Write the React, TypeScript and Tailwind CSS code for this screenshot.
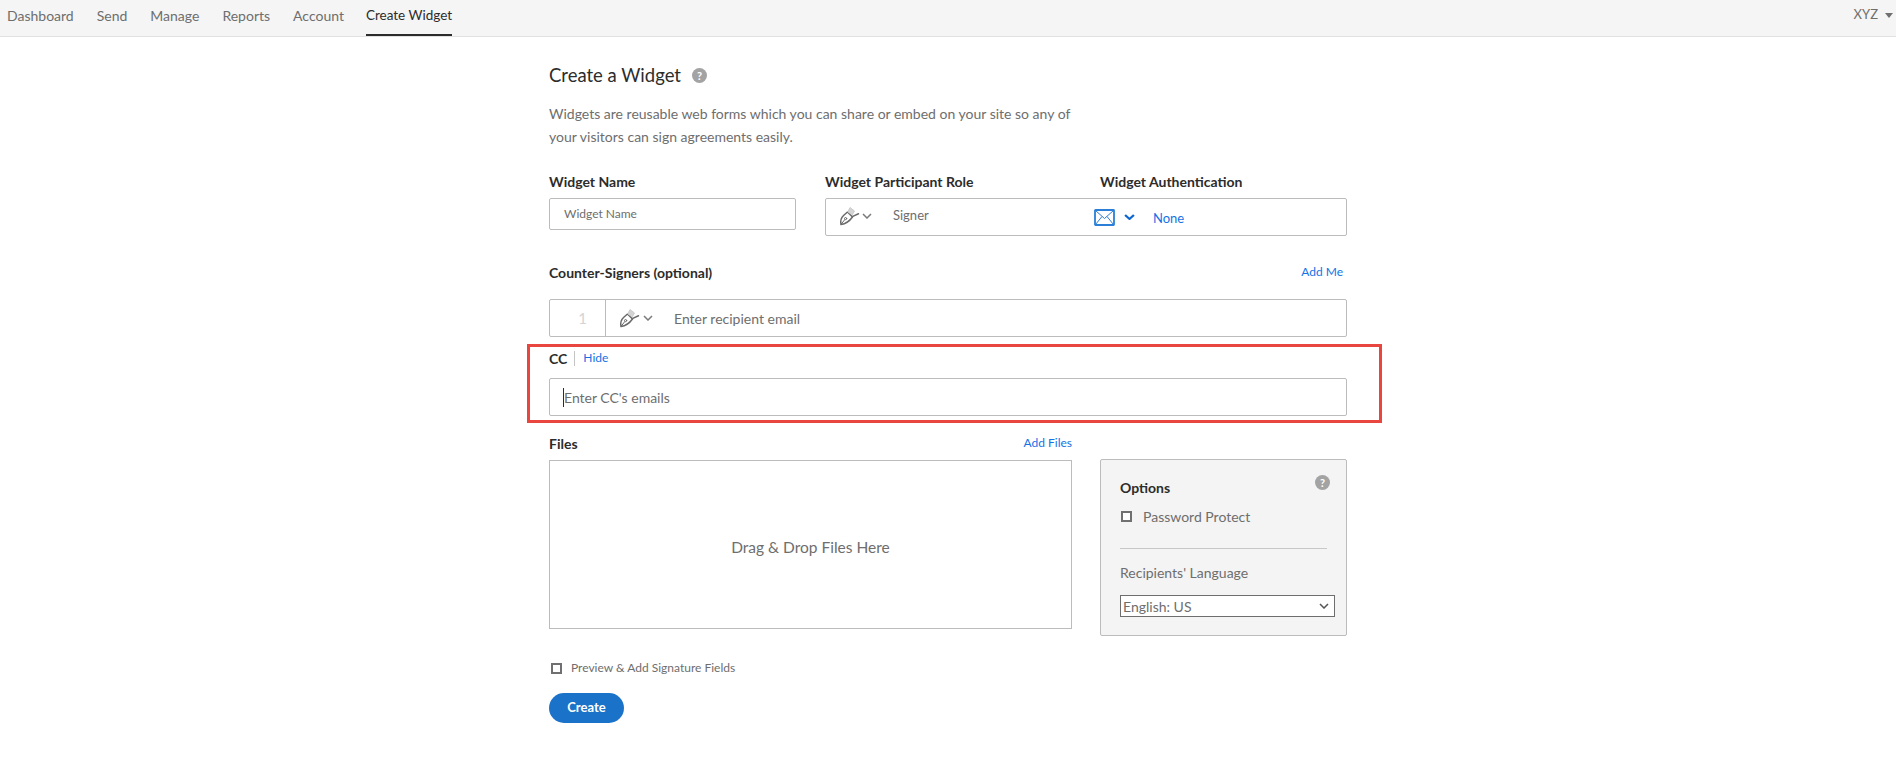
function HelpIcon() {
  return (
    <span className="flex h-[15px] w-[15px] items-center justify-center rounded-full bg-[#a3a3a3] text-[11px] leading-none font-bold text-white">
      ?
    </span>
  );
}

function PenIcon() {
  return (
    <svg width="21" height="20" viewBox="0 0 21 20" fill="none" stroke="#6a6a6a" strokeWidth="1.5" strokeLinejoin="round" strokeLinecap="round">
      <path d="M2 18.5 C1.2 14.5 2.2 11.5 4.8 9.2 L8.5 6 L13.5 11 C11 14.5 7 17.8 2 18.5 Z" />
      <path d="M9 5.5 L11 1.5 L15.5 5 L13.5 8.5 Z" fill="#d4d4d4" stroke="#cccccc" strokeWidth="1" />
      <path d="M13.2 10.6 L19.5 7.8" />
      <path d="M2.4 18 L5.6 13.8" strokeWidth="1" />
      <circle cx="6.6" cy="12.6" r="1.1" strokeWidth="1" />
    </svg>
  );
}

function Chevron({ color = '#7a7a7a', w = 1.5, size = 10 }: { color?: string; w?: number; size?: number }) {
  return (
    <svg width={size} height="6" viewBox="0 0 10 6" preserveAspectRatio="none" fill="none" stroke={color} strokeWidth={w}>
      <path d="M1 1 L5 5 L9 1" />
    </svg>
  );
}

function Envelope() {
  return (
    <svg width="21" height="17" viewBox="0 0 21 17" fill="none" stroke="#2b7fd6" strokeWidth="1">
      <rect x="1" y="1" width="19" height="15" rx="0.5" strokeWidth="1.8" />
      <path d="M1.5 1.5 L10.5 9.5 L19.5 1.5 M1.5 15.5 L8 7.5 M19.5 15.5 L13 7.5" />
    </svg>
  );
}

function Checkbox() {
  return <span className="block h-[11px] w-[11px] border-2 border-[#707070] bg-white" />;
}

const tabs = ['Dashboard', 'Send', 'Manage', 'Reports', 'Account'];

export default function App() {
  return (
    <div className="min-h-[758px] bg-white font-['Lato',sans-serif] text-[14px] text-[#6e6e6e]">
      {/* top nav */}
      <div className="flex h-[37px] items-stretch border-b border-[#e1e1e1] bg-[#f5f5f5] pl-[7px] pr-[3px]">
        <div className="flex gap-[23px]">
          {tabs.map(t => (
            <div key={t} className="flex items-center pb-[5px] text-[14px]">{t}</div>
          ))}
          <div className="-ml-[1px] flex items-center border-b-2 border-[#2c2c2c] pb-[3px] text-[13.5px] text-[#2c2c2c]">Create Widget</div>
        </div>
        <div className="ml-auto flex items-center gap-[7px] pb-[6px] text-[13px]">
          XYZ
          <span className="h-0 w-0 border-x-[4.5px] border-t-[5px] border-x-transparent border-t-[#707070]" />
        </div>
      </div>

      {/* form */}
      <div className="ml-[549px] w-[798px]">
        <div className="mt-[26px] flex h-[24px] items-center gap-[11px]">
          <h1 className="text-[18.5px] leading-none font-normal text-[#2c2c2c]">Create a Widget</h1>
          <HelpIcon />
        </div>
        <p className="mt-[15px] w-[530px] text-[14px] leading-[23px]">
          Widgets are reusable web forms which you can share or embed on your site so any of your visitors can sign agreements easily.
        </p>

        <div className="mt-[25px] flex">
          <div className="w-[247px]">
            <div className="h-[18px] text-[14px] leading-[18px] font-bold text-[#2c2c2c]">Widget Name</div>
            <div className="mt-[7px] flex h-[32px] items-center rounded-[2px] border border-[#bcbcbc] pl-[14px] text-[12px]">Widget Name</div>
          </div>
          <div className="ml-[29px] w-[522px]">
            <div className="flex h-[18px] text-[14px] leading-[18px] font-bold text-[#2c2c2c]">
              <span className="w-[275px]">Widget Participant Role</span>
              <span>Widget Authentication</span>
            </div>
            <div className="mt-[7px] flex h-[38px] items-center rounded-[2px] border border-[#bcbcbc] pb-[3px] pl-[13px]">
              <PenIcon />
              <span className="ml-[2px]"><Chevron /></span>
              <span className="ml-[21px] w-[201px] text-[13px]">Signer</span>
              <span className="mt-[3px] flex items-center">
                <Envelope />
                <span className="ml-[9px]"><Chevron color="#0d66d0" w={2} size={11} /></span>
                <span className="ml-[18px] mt-[3px] text-[13px] text-[#1473e6]">None</span>
              </span>
            </div>
          </div>
        </div>

        <div className="mt-[27px] flex h-[18px] items-center justify-between pr-[4px] text-[14px]">
          <span className="font-bold text-[#2c2c2c]">Counter-Signers (optional)</span>
          <span className="text-[12px] text-[#1473e6]">Add Me</span>
        </div>
        <div className="mt-[18px] flex h-[38px] items-stretch rounded-[2px] border border-[#bcbcbc]">
          <div className="flex w-[56px] items-center justify-center border-r border-[#bcbcbc] pl-[10px] text-[15px] text-[#d4d4d4]">1</div>
          <div className="ml-[13px] flex items-center"><PenIcon /></div>
          <div className="ml-[3px] flex items-center"><Chevron /></div>
          <div className="ml-[21px] flex items-center text-[14px]">Enter recipient email</div>
        </div>

        {/* highlighted cc block */}
        <div className="mt-[7px] -ml-[22px] -mr-[35px] h-[79px] border-[3px] border-[#e8463e] pl-[19px] pr-[32px]">
          <div className="mt-[2px] flex h-[18px] items-center text-[14px]">
            <span className="font-bold text-[#2c2c2c]">CC</span>
            <span className="ml-[7px] h-[15px] w-px bg-[#c4c4c4]" />
            <span className="ml-[8px] text-[12px] text-[#1473e6]">Hide</span>
          </div>
          <div className="mt-[11px] flex h-[38px] items-center rounded-[2px] border border-[#bcbcbc] pl-[13px] text-[14px]">
            <span className="h-[19px] w-px bg-[#2c2c2c]" />
            Enter CC's emails
          </div>
        </div>

        <div className="mt-[11px] flex">
          <div className="w-[523px]">
            <div className="flex h-[18px] items-center justify-between text-[14px]">
              <span className="font-bold text-[#2c2c2c]">Files</span>
              <span className="text-[12px] text-[#1473e6]">Add Files</span>
            </div>
            <div className="mt-[8px] flex h-[169px] items-center justify-center border border-[#bcbcbc] pt-[7px] text-[15.5px]">Drag &amp; Drop Files Here</div>
          </div>
          <div className="ml-[28px] mt-[25px] h-[177px] w-[247px] rounded-[2px] border border-[#bcbcbc] bg-[#f4f4f4] pl-[19px] pr-[11px] pt-[14px]">
            <div className="flex items-start justify-between pr-[5px] text-[14px]">
              <span className="mt-[3px] font-bold text-[#2c2c2c]">Options</span>
              <span className="mt-[1px]"><HelpIcon /></span>
            </div>
            <div className="mt-[8px] flex items-center gap-[11px] pl-[1px] text-[14px]">
              <Checkbox />
              Password Protect
            </div>
            <div className="mt-[21px] mr-[8px] h-px bg-[#c8c8c8]" />
            <div className="mt-[13px] text-[14px]">Recipients' Language</div>
            <div className="mt-[12px] flex h-[22px] items-center justify-between border border-[#6e6e6e] bg-white pl-[2px] pr-[5px] text-[14px]">
              English: US
              <Chevron color="#555555" />
            </div>
          </div>
        </div>

        <div className="mt-[23px] flex items-center gap-[9px] pl-[2px] text-[12px]">
          <Checkbox />
          Preview &amp; Add Signature Fields
        </div>
        <button className="mt-[16px] flex h-[30px] w-[75px] items-center justify-center rounded-full bg-[#1a73c9] text-[13px] font-bold text-white">Create</button>
      </div>
    </div>
  );
}
